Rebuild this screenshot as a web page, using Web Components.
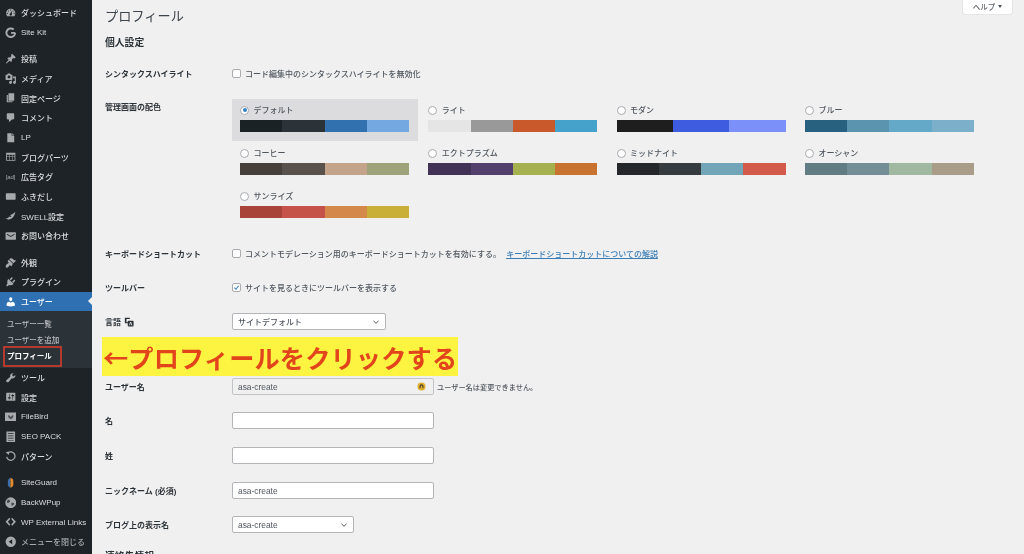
<!DOCTYPE html>
<html lang="ja">
<head>
<meta charset="utf-8">
<title>プロフィール</title>
<style>
  html, body { margin: 0; height: 100%; overflow: hidden; background: #f0f0f1; }
  body {
    display: flex;
    font-family: "Liberation Sans", "Noto Sans CJK JP", sans-serif;
    font-size: 8px;
    font-weight: 500;
    color: #50575e;
    filter: blur(.3px);
  }
</style>
</head>
<body>
<wp-admin-menu>
  <wp-menu-item icon="dashboard">ダッシュボード</wp-menu-item>
  <wp-menu-item icon="sitekit">Site Kit</wp-menu-item>
  <wp-menu-sep></wp-menu-sep>
  <wp-menu-item icon="pin">投稿</wp-menu-item>
  <wp-menu-item icon="media">メディア</wp-menu-item>
  <wp-menu-item icon="pages">固定ページ</wp-menu-item>
  <wp-menu-item icon="comment">コメント</wp-menu-item>
  <wp-menu-item icon="page">LP</wp-menu-item>
  <wp-menu-item icon="grid">ブログパーツ</wp-menu-item>
  <wp-menu-item icon="ad">広告タグ</wp-menu-item>
  <wp-menu-item icon="bubble">ふきだし</wp-menu-item>
  <wp-menu-item icon="swell">SWELL設定</wp-menu-item>
  <wp-menu-item icon="mail">お問い合わせ</wp-menu-item>
  <wp-menu-sep></wp-menu-sep>
  <wp-menu-item icon="brush">外観</wp-menu-item>
  <wp-menu-item icon="plugin">プラグイン</wp-menu-item>
  <wp-menu-item icon="user" current>ユーザー</wp-menu-item>
  <wp-submenu>
    <wp-submenu-item>ユーザー一覧</wp-submenu-item>
    <wp-submenu-item>ユーザーを追加</wp-submenu-item>
    <wp-submenu-item current>プロフィール</wp-submenu-item>
  </wp-submenu>
  <wp-menu-item icon="wrench">ツール</wp-menu-item>
  <wp-menu-item icon="settings">設定</wp-menu-item>
  <wp-menu-item icon="filebird">FileBird</wp-menu-item>
  <wp-menu-item icon="seo">SEO PACK</wp-menu-item>
  <wp-menu-item icon="pattern">パターン</wp-menu-item>
  <wp-menu-sep></wp-menu-sep>
  <wp-menu-item icon="siteguard">SiteGuard</wp-menu-item>
  <wp-menu-item icon="backwpup">BackWPup</wp-menu-item>
  <wp-menu-item icon="code">WP External Links</wp-menu-item>
  <wp-menu-item icon="collapse" dim>メニューを閉じる</wp-menu-item>
</wp-admin-menu>

<wp-profile>
  <wp-form-row style="margin-top:14.5px" height="18" center label="シンタックスハイライト">
    <wp-check>コード編集中のシンタックスハイライトを無効化</wp-check>
  </wp-form-row>
  <wp-form-row style="margin-top:16.5px" height="145.5" label="管理画面の配色">
    <wp-color-grid>
      <wp-color-option selected name="デフォルト" colors="#1b2226,#2c3338,#3271b0,#73a8e0"></wp-color-option>
      <wp-color-option name="ライト" colors="#e5e5e5,#999999,#c9582a,#45a3cb"></wp-color-option>
      <wp-color-option name="モダン" colors="#1e1e1e,#3d5ce0,#7b90f8"></wp-color-option>
      <wp-color-option name="ブルー" colors="#27617f,#5b94ae,#65a9c9,#7cb0ca"></wp-color-option>
      <wp-color-option name="コーヒー" colors="#46403c,#59524c,#c3a48a,#9ea37a"></wp-color-option>
      <wp-color-option name="エクトプラズム" colors="#413256,#523f6d,#a5b04f,#c8732f"></wp-color-option>
      <wp-color-option name="ミッドナイト" colors="#25282b,#363b3f,#73a5b8,#d35a4a"></wp-color-option>
      <wp-color-option name="オーシャン" colors="#627c83,#738e96,#a0b8a0,#a99c88"></wp-color-option>
      <wp-color-option name="サンライズ" colors="#a8433a,#c5534a,#d4884a,#c9ae37"></wp-color-option>
    </wp-color-grid>
  </wp-form-row>
  <wp-form-row height="18" center label="キーボードショートカット">
    <wp-check>コメントモデレーション用のキーボードショートカットを有効にする。 <a>キーボードショートカットについての解説</a></wp-check>
  </wp-form-row>
  <wp-form-row style="margin-top:15.5px" height="18" center label="ツールバー">
    <wp-check checked>サイトを見るときにツールバーを表示する</wp-check>
  </wp-form-row>
  <wp-form-row style="margin-top:16.5px" height="18" center label="言語" translate-icon>
    <wp-select-box width="154">サイトデフォルト</wp-select-box>
  </wp-form-row>
  <wp-form-row style="margin-top:47px" height="18" center label="ユーザー名">
    <wp-text-box readonly manager value="asa-create"></wp-text-box>
    <wp-note>ユーザー名は変更できません。</wp-note>
  </wp-form-row>
  <wp-form-row style="margin-top:16px" height="18" center label="名">
    <wp-text-box></wp-text-box>
  </wp-form-row>
  <wp-form-row style="margin-top:17px" height="18" center label="姓">
    <wp-text-box></wp-text-box>
  </wp-form-row>
  <wp-form-row style="margin-top:17px" height="18" center label="ニックネーム (必須)">
    <wp-text-box value="asa-create"></wp-text-box>
  </wp-form-row>
  <wp-form-row style="margin-top:16px" height="18" center label="ブログ上の表示名">
    <wp-select-box width="122" style="font-size:8.4px">asa-create</wp-select-box>
  </wp-form-row>
  <wp-section-title style="margin-top:16px">連絡先情報</wp-section-title>
</wp-profile>

<script>
const ICONS = {
  dashboard: '<path d="M3.76 16h12.48c1.1-1.37 1.76-3.11 1.76-5 0-4.42-3.58-8-8-8s-8 3.58-8 8c0 1.89.66 3.63 1.76 5zM10 4c.55 0 1 .45 1 1s-.45 1-1 1-1-.45-1-1 .45-1 1-1zM6 6c.55 0 1 .45 1 1s-.45 1-1 1-1-.45-1-1 .45-1 1-1zm8 0c.55 0 1 .45 1 1s-.45 1-1 1-1-.45-1-1 .45-1 1-1zm-5.37 5.55L12 7v6c0 1.1-.9 2-2 2s-2-.9-2-2c0-.57.24-1.08.63-1.45zM4 10c.55 0 1 .45 1 1s-.45 1-1 1-1-.45-1-1 .45-1 1-1zm12 0c.55 0 1 .45 1 1s-.45 1-1 1-1-.45-1-1 .45-1 1-1z" fill-rule="evenodd"/>',
  sitekit: '<path d="M17.500 10.200h-7M17.500 10.200c0 4.300-3.200 7.300-7.500 7.300a7.500 7.500 0 1 1 5.100-13" fill="none" stroke="currentColor" stroke-width="3.400"/>',
  pin: '<path d="M10.44 3.02l1.82-1.82 6.36 6.35-1.83 1.82c-1.05-.68-2.48-.57-3.41.36l-.75.75c-.92.93-1.04 2.35-.35 3.41l-1.83 1.82-2.41-2.41-2.8 2.79c-.42.42-3.38 2.71-3.8 2.29s1.86-3.39 2.28-3.81l2.79-2.79L4.1 9.36l1.83-1.82c1.05.69 2.48.57 3.4-.36l.75-.75c.93-.92 1.05-2.35.36-3.41z"/>',
  media: '<path d="M13 11V4c0-.55-.45-1-1-1h-1.67L9 1H5L3.67 3H2c-.55 0-1 .45-1 1v7c0 .55.45 1 1 1h10c.55 0 1-.45 1-1zM7 4.500c1.38 0 2.500 1.120 2.500 2.500S8.380 9.500 7 9.500 4.500 8.380 4.500 7 5.620 4.500 7 4.500zM14 6h5v10.500c0 1.380-1.120 2.500-2.500 2.500S14 17.880 14 16.500s1.120-2.500 2.500-2.500c.17 0 .34.02.5.05V9h-3V6zm-4 8.050V13h2v3.500c0 1.380-1.120 2.500-2.500 2.500S7 17.880 7 16.500 8.120 14 9.500 14c.17 0 .34.02.5.05z"/>',
  pages: '<path d="M6 15V2h10v13H6zm-1 1h8v2H3V5h2v11z"/>',
  comment: '<path d="M5 2h9c1.100 0 2 .9 2 2v7c0 1.100-.9 2-2 2h-2l-5 5v-5H5c-1.100 0-2-.9-2-2V4c0-1.100.9-2 2-2z"/>',
  page: '<path d="M11.500 2H4v16h12V6.500h-4.500V2zm1 0v3.500H16L12.500 2z"/>',
  grid: '<path fill-rule="evenodd" d="M2 3h16v14H2V3zm1.500 3.500v3h3.500v-3H3.500zm4.500 0v3h4v-3H8zm5 0v3h3.500v-3H13zm-9.500 4v5H7v-5H3.500zm4.500 0v5h4v-5H8zm5 0v5h3.500v-5H13z"/>',
  bubble: '<path d="M2.500 4h15c.6 0 1 .4 1 1v9c0 .6-.4 1-1 1h-15c-.6 0-1-.4-1-1V5c0-.6.4-1 1-1z"/>',
  swell: '<path d="M18 3c-1 7-5 13-11.500 13.500C4 16.700 2 16 1 14.500c3 .8 5-1 6.500-3 1.500.8 3 .5 4-.5C9.500 10.500 9 9.500 9.500 8.500 12 7.500 15 6 18 3z"/>',
  mail: '<path fill-rule="evenodd" d="M2 4h16c.6 0 1 .4 1 1v11c0 .6-.4 1-1 1H2c-.6 0-1-.4-1-1V5c0-.6.4-1 1-1zm1.500 2.500v1.600L10 12l6.500-3.900V6.500L10 10.300 3.500 6.500z"/>',
  brush: '<path d="M14.480 11.060L7.410 3.990l1.500-1.500c.5-.56 2.300-.47 3.510.32 1.210.8 1.430 1.280 2.910 2.100 1.180.64 2.450 1.260 4.450.85zm-.71.71L6.700 4.700 4.930 6.470c-.39.39-.39 1.020 0 1.410l1.060 1.060c.39.39.39 1.030 0 1.420-.6.6-1.430 1.110-2.210 1.690-.35.26-.7.53-1.010.84C1.430 13.710.96 15.650 1.400 17.200c.44 1.550 2.530 1.900 3.830.8.31-.31.58-.66.84-1.010.58-.78 1.090-1.610 1.690-2.210.39-.39 1.030-.39 1.420 0l1.060 1.060c.39.39 1.020.39 1.410 0z"/>',
  plugin: '<path d="M13.110 4.360L9.870 7.600 8 5.730l3.240-3.240c.35-.34 1.050-.2 1.560.32.52.51.66 1.210.31 1.550zm-8 1.770l.91-1.120 9.010 9.010-1.190.84c-.71.71-2.630 1.160-3.820 1.160H6.140L4.900 17.260c-.59.59-1.540.59-2.120 0-.59-.58-.59-1.530 0-2.120l1.240-1.240v-3.880c0-1.130.4-3.190 1.090-3.890zm7.260 3.970l3.240-3.240c.34-.35 1.040-.21 1.550.31.52.51.66 1.210.31 1.550l-3.240 3.250z"/>',
  user: '<path d="M10 9.250c-2.270 0-2.730-3.440-2.730-3.440C7 4.020 7.820 2 9.970 2c2.160 0 2.980 2.020 2.710 3.810 0 0-.41 3.440-2.680 3.440zm0 2.570L12.720 10c2.390 0 4.520 2.330 4.520 4.530v2.490s-3.650 1.130-7.240 1.130c-3.650 0-7.240-1.130-7.240-1.130v-2.490c0-2.250 1.940-4.480 4.470-4.480z"/>',
  wrench: '<path d="M16.680 9.770c-1.340 1.340-3.300 1.670-4.950.99l-5.410 6.520c-.99.99-2.590.99-3.580 0s-.99-2.590 0-3.570l6.520-5.420c-.68-1.650-.35-3.610.99-4.950 1.280-1.280 3.120-1.620 4.720-1.060l-2.890 2.890 2.820 2.820 2.860-2.870c.53 1.580.18 3.390-1.080 4.650z"/>',
  settings: '<path d="M18 16V4c0-.55-.45-1-1-1H3c-.55 0-1 .45-1 1v12c0 .55.45 1 1 1h14c.55 0 1-.45 1-1zM8 11h1c.55 0 1 .45 1 1s-.45 1-1 1H8v1.500c0 .28-.22.5-.5.5s-.5-.22-.5-.5V13H6c-.55 0-1-.45-1-1s.45-1 1-1h1V5.500c0-.28.22-.5.5-.5s.5.22.5.5V11zm5-2h-1c-.55 0-1-.45-1-1s.45-1 1-1h1V5.500c0-.28.22-.5.5-.5s.5.22.5.5V7h1c.55 0 1 .45 1 1s-.45 1-1 1h-1v5.500c0 .28-.22.5-.5.5s-.5-.22-.5-.5V9z"/>',
  filebird: '<rect x="0" y="2.500" width="20" height="15" rx="1" fill="#a7aaad"/><path d="M6 7c-.8 1.800-.5 3.600.8 5l3.200 2.500 3.200-2.500c1.300-1.400 1.600-3.200.8-5-1.500.5-3 1.800-4 3.500-1-1.700-2.500-3-4-3.500z" fill="#4a5055"/>',
  seo: '<path fill-rule="evenodd" d="M2.500 1h15v18h-15V1zM5 4v1h10V4H5zm0 3v1h10V7H5zm0 3v1h10v-1H5zm0 3v1h10v-1H5zm0 3v1h10v-1H5z"/>',
  pattern: '<path d="M5 5.400A7.300 7.300 0 1 1 2.900 12" fill="none" stroke="currentColor" stroke-width="2.200"/><path d="M1 3.500l6.500-.5-1 5.500z"/>',
  siteguard: '<path d="M9.500 1.500C6.500 3 5 4.500 5 7v7c0 2 2 4 4.500 4.500z" fill="#3b6ea8"/><path d="M9.500 1.500c3 1 5 2.500 5 5.500v7c0 2-2 4-5 4.500z" fill="#e08a2c"/>',
  backwpup: '<circle cx="10" cy="10" r="9.500" fill="#a7aaad"/><path d="M5 4.500c2 .5 3.500 1 3.800 2.500S6.500 10 5 10.500 2.500 8 5 4.500zm6.500 5.500c2-.5 4 0 4.800 1.500-1 2-2.500 3.500-4.300 4.300-.5-1.500-1.500-4.300-.5-5.800z" fill="#40464b"/>',
  code: '<path d="M7.500 3L1 10l6.500 7 1.700-2.200L5 10l4.200-4.800zm5 0l-1.700 2.200L15 10l-4.200 4.800 1.700 2.200 6.500-7z"/>',
  collapse: '<path fill-rule="evenodd" d="M10 1a9 9 0 1 1 0 18 9 9 0 0 1 0-18zm2.500 4.500L6.500 10l6 4.500v-9z"/>'
};

class AdminMenu extends HTMLElement {
  connectedCallback() {
    this.attachShadow({ mode: 'open' });
    this.shadowRoot.innerHTML = `<style>
      :host { display: flex; flex-direction: column; flex: none; position: relative; width: 92px; padding-top: 2.8px; background: #1d2327; box-sizing: border-box; height: 554px; overflow: hidden; }
      .mark { position: absolute; left: 3px; top: 346px; width: 59px; height: 21px; box-sizing: border-box; border: 2px solid #b5392c; }
    </style><slot></slot><div class="mark"></div>`;
  }
}

class MenuSep extends HTMLElement {
  connectedCallback() {
    this.attachShadow({ mode: 'open' });
    this.shadowRoot.innerHTML = `<style>:host { display: block; height: 6.9px; flex: none; }</style>`;
  }
}

class MenuItem extends HTMLElement {
  connectedCallback() {
    let icon = this.getAttribute('icon');
    let glyph = icon == 'ad'
      ? `<span class="ad">[ad]</span>`
      : `<svg viewBox="0 0 20 20" fill="currentColor">${ICONS[icon]}</svg>`;
    this.attachShadow({ mode: 'open' });
    this.shadowRoot.innerHTML = `<style>
      :host { display: flex; align-items: center; flex: none; position: relative; height: 19.67px; padding-left: 4.5px; gap: 4.5px; color: #dcdde0; font-size: 8px; white-space: nowrap; }
      :host([current]) { background: #2f70b3; color: #fff; }
      :host([dim]) { color: #a7aaad; }
      .icon { width: 12px; height: 12px; display: flex; align-items: center; justify-content: center; color: #a7aaad; flex: none; }
      :host([current]) .icon { color: #fff; }
      svg { width: 11.5px; height: 11.5px; display: block; }
      .ad { font-size: 6px; letter-spacing: -.1px; }
      .arrow { position: absolute; right: 0; top: 5px; border: 4.6px solid transparent; border-right-color: #f0f0f1; border-left: 0; }
    </style><span class="icon">${glyph}</span><slot></slot>${this.hasAttribute('current') ? '<span class="arrow"></span>' : ''}`;
  }
}

class Submenu extends HTMLElement {
  connectedCallback() {
    this.attachShadow({ mode: 'open' });
    this.shadowRoot.innerHTML = `<style>:host { display: block; flex: none; background: #2c3338; padding: 4px 0; }</style><slot></slot>`;
  }
}

class SubmenuItem extends HTMLElement {
  connectedCallback() {
    this.attachShadow({ mode: 'open' });
    this.shadowRoot.innerHTML = `<style>
      :host { display: flex; align-items: center; height: 16.1px; padding-left: 7px; font-size: 7.5px; color: #b9bcc0; white-space: nowrap; }
      :host([current]) { color: #fff; font-weight: 700; }
    </style><slot></slot>`;
  }
}

class Profile extends HTMLElement {
  connectedCallback() {
    this.attachShadow({ mode: 'open' });
    this.shadowRoot.innerHTML = `<style>
      :host { display: block; flex: 1; position: relative; min-width: 0; height: 554px; overflow: hidden; padding: 0 12px 0 13px; box-sizing: border-box; }
      header { display: flex; justify-content: space-between; align-items: flex-start; }
      h1 { margin: 8px 0 0; font-size: 13.2px; line-height: 17px; font-weight: 400; color: #3c434a; }
      .help { width: 49px; height: 13.5px; display: flex; align-items: center; justify-content: center; gap: 3px; box-sizing: border-box; padding-bottom: 1px; background: #fff; border-radius: 0 0 2px 2px; box-shadow: 0 0 0 .6px #dcdcde; color: #646970; font-size: 7.5px; }
      .help i { border: 2.2px solid transparent; border-top: 3px solid #50575e; border-bottom: 0; }
      h2 { margin: 11px 0 0; font-size: 9.8px; line-height: 14px; font-weight: 700; color: #2c3338; }
      .note { position: absolute; left: 10px; top: 337px; width: 356px; height: 39px; display: flex; align-items: center; padding-left: 1px; box-sizing: border-box; background: #fdf341; color: #e2451c; font-family: "Noto Sans CJK JP", sans-serif; font-size: 25.2px; letter-spacing: .15px; font-weight: 700; white-space: nowrap; }
    </style>
    <header><h1>プロフィール</h1><div class="help">ヘルプ<i></i></div></header>
    <h2>個人設定</h2>
    <slot></slot>
    <div class="note">←プロフィールをクリックする</div>`;
  }
}

class FormRow extends HTMLElement {
  connectedCallback() {
    let label = this.getAttribute('label');
    let trans = this.hasAttribute('translate-icon')
      ? `<svg viewBox="0 0 12 12" width="10" height="10"><path d="M1 1h6v1.300H3v4h2v1.300H1z" fill="#2c3338"/><rect x="4.500" y="4.500" width="7" height="7" rx="1" fill="#2c3338"/><path d="M6.500 10L8 6l1.500 4" fill="none" stroke="#f0f0f1"/></svg>`
      : '';
    this.attachShadow({ mode: 'open' });
    this.shadowRoot.innerHTML = `<style>
      :host { display: grid; grid-template-columns: 127px 1fr; height: ${this.getAttribute('height')}px; }
      :host([center]) { align-items: center; }
      .label { display: flex; align-items: center; gap: 3px; color: #2c3338; font-weight: 700; font-size: 8px; white-space: nowrap; }
      :host(:not([center])) .label { height: 14px; }
      .field { display: flex; align-items: center; gap: 3px; min-width: 0; }
      :host(:not([center])) .field { align-items: flex-start; }
    </style><div class="label">${label}${trans}</div><div class="field"><slot></slot></div>`;
  }
}

class ColorGrid extends HTMLElement {
  connectedCallback() {
    this.attachShadow({ mode: 'open' });
    this.shadowRoot.innerHTML = `<style>:host { display: grid; grid-template-columns: repeat(4, 186px); column-gap: 2.3px; grid-auto-rows: 43px; }</style><slot></slot>`;
  }
}

class ColorOption extends HTMLElement {
  connectedCallback() {
    let colors = this.getAttribute('colors').split(',');
    let bars = colors.map((c) => `<span style="background:${c}"></span>`).join('');
    this.attachShadow({ mode: 'open' });
    this.shadowRoot.innerHTML = `<style>
      :host { display: block; box-sizing: border-box; padding: 6px 8px 0; height: 42px; font-size: 8px; color: #50575e; white-space: nowrap; }
      :host([selected]) { background: #dcdcde; }
      .head { display: flex; align-items: center; gap: 4.5px; height: 10px; }
      .head b { font-weight: inherit; margin-bottom: 2px; }
      .radio { width: 9px; height: 9px; box-sizing: border-box; border: 1px solid #a9abaf; border-radius: 50%; background: #fff; display: flex; align-items: center; justify-content: center; flex: none; }
      :host([selected]) .radio::after { content: ""; width: 4px; height: 4px; border-radius: 50%; background: #3582c4; }
      .bar { display: flex; height: 11.5px; margin-top: 5px; width: 169px; }
      .bar span { flex: 1; }
    </style><div class="head"><span class="radio"></span><b>${this.getAttribute('name')}</b></div><div class="bar">${bars}</div>`;
  }
}

class Check extends HTMLElement {
  connectedCallback() {
    let tick = this.hasAttribute('checked')
      ? `<svg viewBox="0 0 10 10" width="9" height="9"><path d="M2 5.200L4.200 7.500 8 2.500" fill="none" stroke="#3582c4" stroke-width="1.500"/></svg>`
      : '';
    this.attachShadow({ mode: 'open' });
    this.shadowRoot.innerHTML = `<style>
      :host { display: flex; align-items: center; gap: 4px; font-size: 8px; color: #50575e; white-space: nowrap; }
      .box { width: 9px; height: 9px; box-sizing: border-box; border: 1px solid #a9abaf; border-radius: 2px; background: #fff; display: flex; align-items: center; justify-content: center; flex: none; }
      ::slotted(a) { color: #3a7db5; text-decoration: underline; margin-left: 3px; }
    </style><span class="box">${tick}</span><span><slot></slot></span>`;
  }
}

class SelectBox extends HTMLElement {
  connectedCallback() {
    this.attachShadow({ mode: 'open' });
    this.shadowRoot.innerHTML = `<style>
      :host { display: flex; align-items: center; justify-content: space-between; box-sizing: border-box; width: ${this.getAttribute('width')}px; height: 17px; padding: 0 5px; border: 1px solid #b3b5b8; border-radius: 2px; background: #fff; font-size: 8px; color: #50575e; white-space: nowrap; }
      svg { display: block; }
    </style><span><slot></slot></span><svg viewBox="0 0 10 10" width="8" height="8"><path d="M1.800 3.600L5 6.600 8.200 3.600" fill="none" stroke="#50575e" stroke-width="1.200"/></svg>`;
  }
}

class TextBox extends HTMLElement {
  connectedCallback() {
    let manager = this.hasAttribute('manager')
      ? `<svg viewBox="0 0 10 10" width="9" height="9"><circle cx="5" cy="5" r="4.500" fill="#e2b02e"/><path d="M2.800 7V4.800a2.200 2.200 0 0 1 4.400 0V7H6V4.800a1 1 0 0 0-2 0V7z" fill="#3a3a2a"/></svg>`
      : '';
    this.attachShadow({ mode: 'open' });
    this.shadowRoot.innerHTML = `<style>
      :host { display: flex; align-items: center; justify-content: space-between; flex: none; box-sizing: border-box; width: 202px; height: 17px; padding: 0 7px 0 5px; border: 1px solid #b3b5b8; border-radius: 2px; background: #fff; font-size: 8.4px; color: #50575e; }
      :host([readonly]) { background: #f0f0f1; border-color: #c3c4c7; }
      svg { display: block; }
    </style><span>${this.getAttribute('value') || ''}</span>${manager}`;
  }
}

class Note extends HTMLElement {
  connectedCallback() {
    this.attachShadow({ mode: 'open' });
    this.shadowRoot.innerHTML = `<style>:host { display: block; font-size: 7.2px; color: #50575e; white-space: nowrap; }</style><slot></slot>`;
  }
}

class SectionTitle extends HTMLElement {
  connectedCallback() {
    this.attachShadow({ mode: 'open' });
    this.shadowRoot.innerHTML = `<style>:host { display: block; font-size: 9.8px; line-height: 14px; font-weight: 700; color: #2c3338; }</style><slot></slot>`;
  }
}

customElements.define('wp-admin-menu', AdminMenu);
customElements.define('wp-menu-sep', MenuSep);
customElements.define('wp-menu-item', MenuItem);
customElements.define('wp-submenu', Submenu);
customElements.define('wp-submenu-item', SubmenuItem);
customElements.define('wp-profile', Profile);
customElements.define('wp-form-row', FormRow);
customElements.define('wp-color-grid', ColorGrid);
customElements.define('wp-color-option', ColorOption);
customElements.define('wp-check', Check);
customElements.define('wp-select-box', SelectBox);
customElements.define('wp-text-box', TextBox);
customElements.define('wp-note', Note);
customElements.define('wp-section-title', SectionTitle);
</script>
</body>
</html>
